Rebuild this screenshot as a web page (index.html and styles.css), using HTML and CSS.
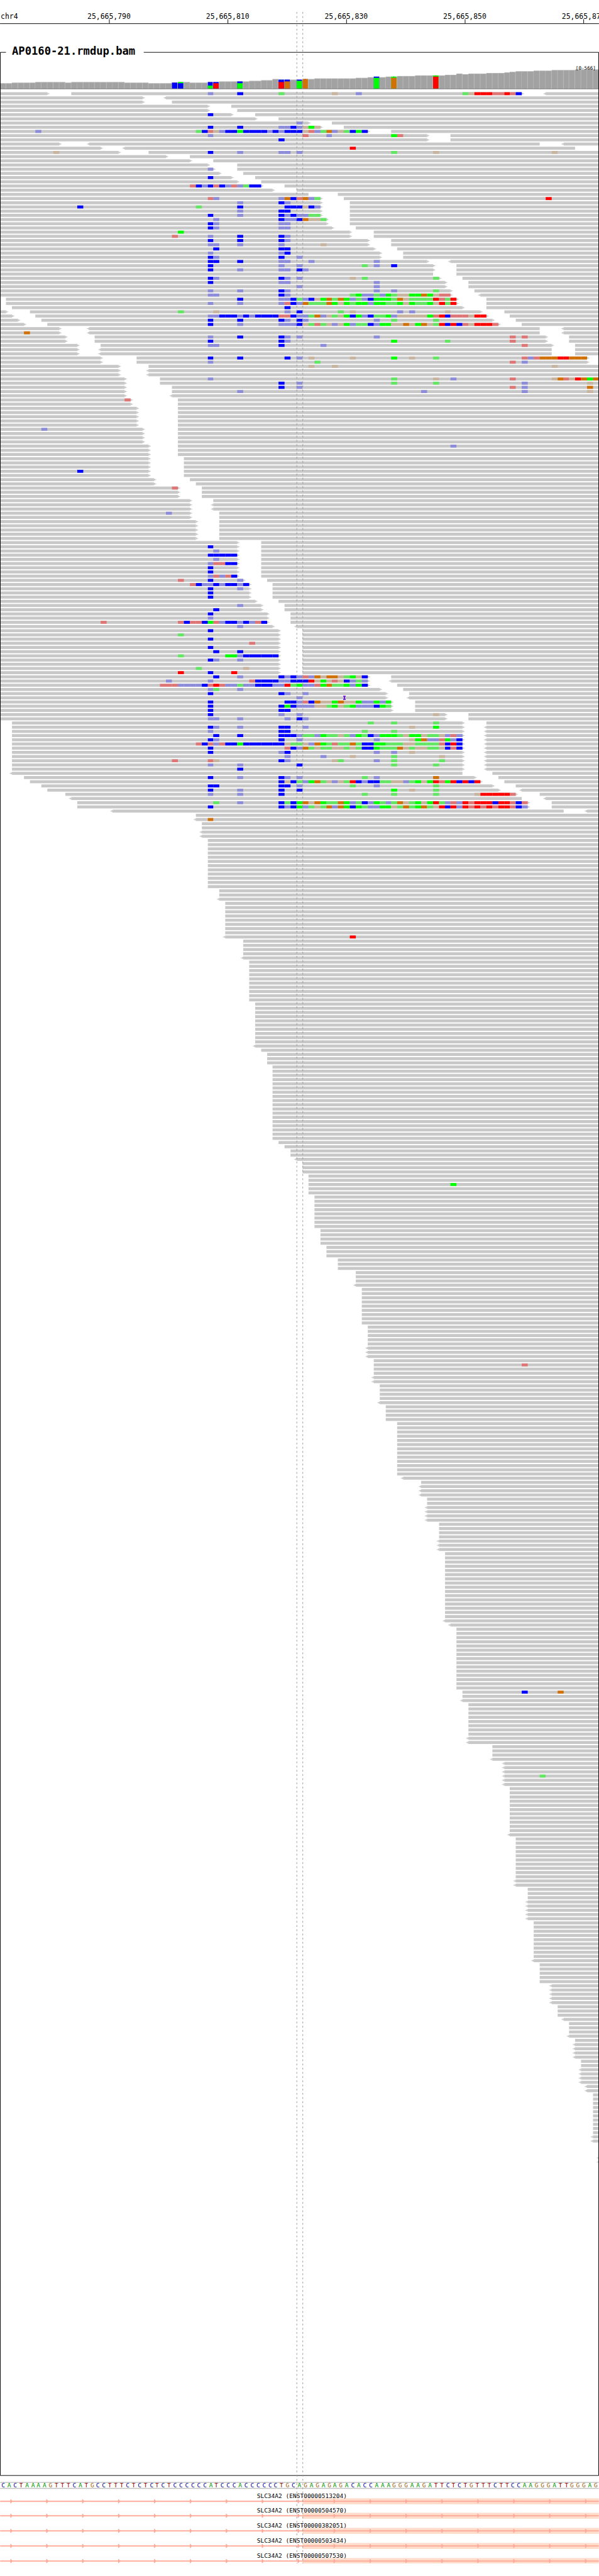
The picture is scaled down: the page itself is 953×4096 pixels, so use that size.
FILE: index.html
```html
<!DOCTYPE html>
<html lang="en">
<head>
<meta charset="utf-8">
<title>AP0160-21.rmdup.bam</title>
<link rel="stylesheet" href="styles.css">
</head>
<body>
<main class="browser">
  <svg class="panel ruler" viewBox="0 0 1000 60" role="img" aria-label="Ruler">
    <text class="ruler-text" x="1" y="32">chr4</text>
    <g id="ticks"></g>
    <rect x="0" y="39" width="1000" height="1"/>
  </svg>
  <svg class="panel track" viewBox="0 60 1000 4075" role="img" aria-label="Aligned reads">
    <g id="coverage"></g>
    <rect class="baseline" x="0" y="148" width="1000" height="1"/>
    <text class="range-text" x="961" y="117">[0-566]</text>
    <g id="reads"></g>
    <path class="frame" d="M10 87.500H.5V4130.500H999.500V87.500H240"/>
    <text class="title-text" x="20" y="92">AP0160-21.rmdup.bam</text>
  </svg>
  <svg class="panel sequence" viewBox="0 4135 1000 22" role="img" aria-label="Reference sequence">
    <path class="rule" d="M0 4141.500H1000M0 4151.500H1000"/>
    <g id="bases"></g>
  </svg>
  <section id="transcripts" class="transcripts" aria-label="Transcripts"></section>
  <svg class="guides" viewBox="0 0 1000 4277" aria-hidden="true">
    <path class="guide" d="M495.500 20V4277M505.500 20V4277"/>
  </svg>
</main>
<script src="app.js"></script>
</body>
</html>
```
FILE: styles.css
```css
body {
  margin: 0;
  background: #fff;
  font-family: "DejaVu Sans Mono", monospace;
}

.browser {
  position: relative;
  overflow: hidden;
}

.panel {
  display: block;
  width: 100%;
  height: auto;
}

.guides {
  position: absolute;
  top: 0;
  left: 0;
  width: 100%;
  height: auto;
}

.guide {
  fill: none;
  stroke: #969696;
  stroke-dasharray: 3 4;
}

.ruler-text { font-size: 12px; }
.tick-text { font-size: 12px; text-anchor: middle; }
.title-text { font-size: 18px; font-weight: bold; }
.range-text { font-size: 8px; }
.base-text { font-size: 10px; text-anchor: middle; }
.label-text { font-size: 10px; text-anchor: middle; }

.frame { fill: none; stroke: #000; }
.rule { fill: none; stroke: #a8a8a8; }
.baseline { fill: #787878; }

.bar { fill: #b2b2b2; }
.bar-core { fill: #a2a2a2; }
.read { fill: #c8c8c8; }
.insertion { fill: #7318dc; }

.C { fill: #0000ff; }
.A { fill: #00ff00; }
.T { fill: #ff0000; }
.G { fill: #d17105; }
.c { fill: #8c8cda; }
.a { fill: #63e663; }
.t { fill: #df7676; }
.g { fill: #c9b59f; }

.base-C { fill: #000096; }
.base-A { fill: #009600; }
.base-T { fill: #960000; }
.base-G { fill: #a0600a; }

.exon { fill: #ffddcc; }
.strand { fill: #ffaa99; }
```
FILE: app.js
```js
// One base is 9.9 units wide; edges snap to whole units.
const edge = (col) => Math.round(col * 9.9);
const rect = (cls, x, y, w, h) =>
  `<rect class="${cls}" x="${x}" y="${y}" width="${w}" height="${h}"/>`;
const put = (id, markup) => { document.getElementById(id).innerHTML = markup; };

// Ruler
put("ticks", [790, 810, 830, 850, 870].map((n, i) => {
  const x = 182 + 198 * i;
  return rect("tick", x, 32, 1, 7) +
    `<text class="tick-text" x="${x}" y="32">25,665,${n}</text>`;
}).join(""));

// Coverage: [number of bases, top edge]
const depth = [[2,139],[4,138],[5,137],[1,138],[9,137],[4,138],[4,139],[1,138],[2,137],[3,138],
  [2,137],[4,136],[1,136],[2,135],[2,134],[1,132],[4,133],[2,132],[7,131],[2,130],[1,129],[1,128],
  [1,129],[2,128],[3,127],[5,126],[2,125],[1,123],[1,124],[3,123],[3,122],[1,121],[1,120],[3,119],
  [3,118],[4,117],[4,116]];
// Variant columns: column -> base and top edge, stacked down to the baseline
const variants = {
  29: [["C",138]], 30: [["A",137],["C",139]], 35: [["C",137],["A",143]],
  36: [["C",137],["T",139]], 40: [["C",136],["A",139]], 47: [["C",133],["T",137]],
  48: [["C",133],["G",136]], 50: [["C",133],["A",135]], 51: [["G",132]],
  63: [["C",128],["A",130]], 66: [["A",128],["G",130]], 73: [["A",126],["T",128]]
};
const dots = [["T",29,138],["G",35,137],["G",36,137],["A",47,133],["T",51,132],["C",66,128],["T",73,126]];
let bars = "";
let col = 0;
for (const [count, top] of depth) {
  for (let n = 0; n < count; n++, col++) {
    const x = edge(col);
    const w = edge(col + 1) - x;
    bars += rect("bar", x, top, w, 148 - top);
    if (variants[col]) {
      for (const [base, y] of variants[col]) bars += rect(base, x, y, w - 1, 148 - y);
    } else {
      bars += rect("bar-core", x, top + 1, w - 1, 147 - top);
    }
  }
}
for (const [base, c, y] of dots) bars += rect(base, edge(c) + 4, y, 1, 1);
put("coverage", bars);

// Reads, one line per row. "a-b" is a read, < and > mark its strand tip,
// "35cC" puts mismatches from column 35 on (lower case: low quality), "*n" repeats.
const rows = `
-8> 12-88> <92- 35c 40C 47a 56g 60c 78agTTTttTtC
-24> <28-
-24> 29-
-35> 39-
-35> 40-
-39> 43- 35C
-43> 47-
-52> 56- 50c
-54> 58- 35C 40C 47ccCcgAg
-62> 66- 6c 33aCtgcCCACCCCcCcCCCgtcaGcgaCAC
-72> 76- 35c 51t 55c 66At
-72> 76- 47C
-10> <15-91 <95-
-17> <21-97 59T
-20> 25- 9g 35C 40c 47cc 50c 66a 73g 93g
-28> 32-
-32> 36-
-35> 40-
-36> 40- 35c
-37> 41-
-39> 43- 35C
-40> 44-
-44> 48- 32tCcCtCctcaCC
-46> 50-
-52 57-
-54> 58- 35tc 47cGCtGca 92T
-54> 59- 40c 47Cc
-54> 59- 13C 33a 40C 48CCCgCc
-54> 59- 40c 47CC
-54> 59- 35C 40c 47CcCccaa
-55> 59- 36c 47CccCGgga
-55> 59- 35Cc 47cc
-56> 60- 35Cc 47cc
-59> 63- 30A
-59> 63- 29t 35c 40C 47Cc
-62> 66- 35C 40C 47Cc
-62> 66- 35cc 40c 47c 54g
-63> 67- 36C 47CC
-64> 68- 35c 47cC
-64> 68- 35Cc 47C 50c
-72> <76- 35CC 40C 47cc 52c 63c
-73> 77- 35C 47c 50c 61a 63c 66C
-73> 77- 35C 40c 47cc 50Cc
-73 77-
-74> 78- 35Cc 47Cc 50c 59g 61a 73a
-75> 79- 35C 47cc 63c
-75> 79- 50c 63c
-76> 80- 35c 40c 47Cc 63c 66c 73a
-76> <81- 35cc 47Cc 59aAccacAaggAAGAgtt
1-77> 82- 40C 47ccCacCgAGaGAcacCAAAaGgaaaaTtaT
1-77> 82- 35c 40c 47ctCcGaaaGAgAaAAcAAaaAgAaaAgTaT
2-78> 82- 48C
-1> 5-81> 85- 30a 36g 48c 50C 57a 59g 67c 69c 75g
-2> 6-82> 86- 35ccCCCcCcCCCCttCccaGcgagACAcCaaAcgggggAtTCtttgTT
-3> 7-83> 87- 35C 40C 47Cc 50Cc 63c 66a 73a
-4> 8-84> 88- 35C 40c 47cccCgatagcgAcaaCcAAggGgAGgaTCTCtgTTTt
-10> <15-91 <95-
-10> <15-91 <95- 4G
-11> 16-92> 96- 35c 40C 47Cc 50c 63c 86t 88t
-11> 16-92> 96- 35C 47Cc 66A 75a 86t
-13> 17-93> 97- 35cc 47C 54c 88t
-13> <17-93 97- *2
-17> 23-99> 35C 40C 48C 50c 52g 59g 66A 69g 73a 88tctGGGTTGGG
-17> 23-99> 35c 53a 86t 88c
-20> 25- 52g 56g 93g
-20> <25- *2
-21> 27- 35c 66a 73g 76c 86t 93gGtgTGAG
-21> 27- 47C 50c 66a 73a 88c 99g
-21> 29- 47C 50c 86t 88c 99G
-21> 29- 40c 71c 88c 99g
-21> <29-
-22> 30- 21t
-22> 30-
-23> 30- *5
-24> 30- 7c
-24> 30- *3
-25> 30- 76c
-25> 30- *2
-25> 31- *3
-25> 31- 13C
-25> 31-
-26> 32-
-26> 33-
-30> 34- 29t
-30> 34- *2
-32> 36-
-32> <36- *2
-32> 37- 28c
-32> 37-
-33> 37- *5
-40> 44-
-40> 44- 35C
-40> 44- 36c
-40> 44- 35CCCCC
-40> 44- 36c
-40> 44- 35cttCC
-40> 44- 35C *2
-40> 44- 35ctctC
-41> 45- 30t 35C 40c
-42> 46- 32tCccCcCCcC
-42> 46- 35C 40c
-42> 46- 35C *2
-43> 47-
-44> 48- 40c
-44> 48- 36C
-45> 49- 35C
-45> 49- 35c
-45> 49- 17t 30tCttCAtcCCcCctC
-46> <50- 40c
-47> 51- 35C
-47> 51- 30a
-47> 51- 35C
-47> 51- 42t
-47> 51- 35C
-47> 51- 36C 40C
-47> 51- 30a 38AAcCCCCCC
-47> 51- 35Cc 40c
-47> 51-
-47> 51- 33a 41g
-47> 51- 30T 35C 39T
-62> 66- 36C 40c 47CcCctcGgGGgaAgC
-62> <66- 28c 35c 42tCCCCccCCCTgAgtgCcac
-62> 67- 27tttccccCtTtccaccCCCccTaAcctAGaaAcAC
-64> 68- 35ca 40c
-65> 69- 35C 47Cc 51c
-65> <69- 50c 58!
-66> 70- 35C 48CCctCGggAGggAccAcA
-66> 70- 35C 47CACcccggaAgaAcccCAa
-66> 70- 35C 47CC
-75> 79- 35C 47c 50c 73g
-75> 79- 35cc 40c 48c 50Cc
2-78> 82- 62a 66a 73a
2-78> <82- 35Cc 40c 47CC 51c 69g 73A
2-78> <82- 35c 47CC 61a 66a
2-78> <82- 36C 40C 47CCCcaacAaagacAaCcAAAagAAgaagctc
2-78> <82- 35Cc 47C 50c 63c 69gAGcctAcC
2-78> <82- 33tCtctCCACCCCCCCgaagcGAataaGaCCAAaaaggaaaatCTC
2-78> <82- 35C 48tCcGagaaggagaCCAaaaGgaggaagCtC
2-78> <82- 35C 47cC 63c 66c 69g
2-78> <82- 48c 54c 59g 66a 74g
2-78> <82- 29t 35tg 47Cc 56ga 63c 66a 74a
2-78> <82- 35c 40c 50C 66a 73a
2-78> <82- 40C
<2-78 83-
4-80> 84- 35C 40c 47Cc 50c 61a 63c 73G
5-81> 85- 47CgCacAGagcgaTCcCCaaggcaAgATtATCTCT
7-83> 87- 35CC 47CC 50c 59a 63c 73a
8-84> <88- 35C 40c 47C 50C 66A 69g 73a
11-87> 91- 35c 40c 47C 61a 66a 73a 80gTTTTTt
<12-88 <92-
13-89> 93- 36a 40c 47CaCAGgGAaaGAcaCcAacaGgaAgATactcTtTTTCTTtCt
13-89> 93- 35C 47CcCAcagaGcGACAaccAAgaGaAGagTCTcTtTtTtTTtCc
<19-95 <99-
33-
<33- 35G
34- *2
<34- *2
35- *12
37- *2
<37-
38- *8
<38- 59T
41- *4
<41-
42- *10
43- *10
<43-
44-
45- *3
46- *18
47-
48-
49- *2
<50-
51- *3
52- *2
52- 76A
52- *2
53- *8
54- *4
55- *3
57- *3
60- *3
<60-
61- *9
62- *5
<62- *3
63-
63- 88t
63- *2
<63- *2
64- *4
<64-
65- *4
67- *13
<68-
71-
<71- *3
72- *2
<72- *4
74- *4
<74- *3
75- *16
<75-
<76-
77- *15
78- 88C 94G
78-
<78-
79- *8
<79- *2
83- *3
<83-
<85- *3
<85- 91a
<85- *2
86- *11
<86-
87- *10
<87- *2
89- *3
<89- *5
90- *9
<90-
91- *5
<93- *5
94- *3
<95-
96- *3
<96-
97-
<97- *4
98- *2
<98- *4
<99- *2
100- *10
<100- *2
101- *3
<101- *2`.trim().split("\n");

function drawRow(tokens, y) {
  let out = "";
  for (const token of tokens) {
    const read = token.match(/^(<?)(\d*)-(\d*)(>?)$/);
    if (read) {
      const from = edge(Number(read[2] || 0));
      const to = edge(Number(read[3] || 101));
      if (to > from) out += rect("read", from, y, to - from, 5);
      if (read[1]) out += rect("read", from - 2, y + 1, 2, 3) + rect("read", from - 4, y + 2, 2, 1);
      if (read[4]) out += rect("read", to, y + 1, 2, 3) + rect("read", to + 2, y + 2, 2, 1);
      continue;
    }
    const marks = token.match(/^(\d+)(\D+)$/);
    const first = Number(marks[1]);
    [...marks[2]].forEach((base, i) => {
      const x = edge(first + i);
      if (base === "!") {
        out += rect("insertion", x - 1, y - 1, 4, 2) + rect("insertion", x, y, 2, 5) +
          rect("insertion", x - 1, y + 4, 4, 2);
      } else {
        out += rect(base, x, y, edge(first + i + 1) - x, 5);
      }
    });
  }
  return out;
}

let reads = "";
let y = 154;
for (const line of rows) {
  const tokens = line.split(" ");
  const last = tokens[tokens.length - 1];
  const repeat = last[0] === "*" ? Number(tokens.pop().slice(1)) : 1;
  for (let n = 0; n < repeat; n++, y += 7) reads += drawRow(tokens, y);
}
put("reads", reads);

// Reference bases
const sequence = "CACTAAAAGTTTCATGCCTTTCTCTCTCTCCCCCCATCCCACCCCCCTGCA" +
  "GAGAGAGACACCAAAGGGAAGATTCTCTGTTTCTTCCAAGGGATTGGGAG";
put("bases", [...sequence].map((base, i) =>
  `<text class="base-text base-${base}" x="${edge(i) + 5}" y="4150">${base}</text>`).join(""));

// Transcripts
let arrows = "";
for (let x = 17; x < 1000; x += 60) arrows += `M${x} 12.500h1l2.500 3.500l-2.500 3.500h-1z`;
const ids = ["ENST00000513204", "ENST00000504570", "ENST00000382051", "ENST00000503434", "ENST00000507530"];
put("transcripts", ids.map((id, i) => {
  const height = i === ids.length - 1 ? 20 : 25;
  return `<svg class="panel" viewBox="0 0 1000 ${height}" role="img" aria-label="SLC34A2 ${id}">` +
    rect("exon", 505, 11, 495, 10) + rect("strand", 0, 15, 1000, 2) +
    `<path class="strand" d="${arrows}"/>` +
    `<text class="label-text" x="504" y="10">SLC34A2 (${id})</text></svg>`;
}).join(""));
```
